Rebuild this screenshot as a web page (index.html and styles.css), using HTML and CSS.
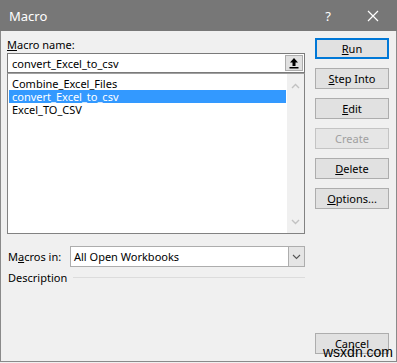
FILE: index.html
```html
<!DOCTYPE html>
<html lang="en">
<head>
    <meta charset="UTF-8">
    <meta name="viewport" content="width=device-width, initial-scale=1.0">
    <title>Macro</title>
    <link rel="stylesheet" href="styles.css">
</head>
<body>
    <div class="dialog">
        <div class="titlebar">
            <span class="title">Macro</span>
            <span class="help">?</span>
            <span class="close">
                <svg width="12" height="12" viewBox="0 0 12 12"><path d="M1 1 L11 11 M11 1 L1 11" stroke="#fff" stroke-width="1.2" fill="none"/></svg>
            </span>
        </div>

        <div class="content">
            <div class="main">
                <div class="name-label"><u>M</u>acro name:</div>
                <div class="name-box">
                    <span class="name-value">convert_Excel_to_csv</span>
                    <span class="up-btn">
                        <svg width="10" height="12" viewBox="0 0 10 12"><path d="M5 1 L9 5.5 L6.5 5.5 L6.5 9 L3.5 9 L3.5 5.5 L1 5.5 Z" fill="#000"/><rect x="0.5" y="10" width="9" height="1.5" fill="#000"/></svg>
                    </span>
                </div>
                <div class="list">
                    <div class="items">
                        <div class="item">Combine_Excel_Files</div>
                        <div class="item selected">convert_Excel_to_csv</div>
                        <div class="item">Excel_TO_CSV</div>
                    </div>
                    <div class="scrollbar">
                        <svg width="9" height="6" viewBox="0 0 9 6"><path d="M1 5 L4.5 1.5 L8 5" stroke="#c2c2c2" stroke-width="1.4" fill="none"/></svg>
                        <svg width="9" height="6" viewBox="0 0 9 6"><path d="M1 1 L4.5 4.5 L8 1" stroke="#c2c2c2" stroke-width="1.4" fill="none"/></svg>
                    </div>
                </div>
                <div class="macros-in">
                    <span class="macros-label">M<u>a</u>cros in:</span>
                    <div class="select">
                        <span class="select-value">All Open Workbooks</span>
                        <span class="drop">
                            <svg width="9" height="6" viewBox="0 0 9 6"><path d="M1 1 L4.5 4.5 L8 1" stroke="#555" stroke-width="1.1" fill="none"/></svg>
                        </span>
                    </div>
                </div>
                <div class="description">
                    <span>Description</span>
                    <span class="rule"></span>
                </div>
            </div>

            <div class="buttons">
                <button class="btn default"><u>R</u>un</button>
                <button class="btn"><u>S</u>tep Into</button>
                <button class="btn"><u>E</u>dit</button>
                <button class="btn disabled">Create</button>
                <button class="btn"><u>D</u>elete</button>
                <button class="btn"><u>O</u>ptions...</button>
                <button class="btn cancel">Cancel</button>
            </div>
        </div>

        <span class="watermark">wsxdn.com</span>
    </div>
</body>
</html>
```

FILE: styles.css
```css
body {
  margin:0;
  background:#f0f0f0;
  font-family:"Noto Sans", "DejaVu Sans", sans-serif;
  font-size:11px;
  color:#000;
}
.dialog {
  position:relative;
  width:397px;
  height:362px;
  box-sizing:border-box;
  border:1px solid #8a8a8a;
  border-top:none;
  background:#f0f0f0;
  display:flex;
  flex-direction:column;
}
.titlebar {
  height:31px;
  margin:0 -1px;
  background:#777777;
  color:#fff;
  display:flex;
  align-items:center;
  flex-shrink:0;
}
.titlebar .title {
  margin-left:9px;
  font-size:13px;
  flex:1;
}
.titlebar .help {
  font-size:13px;
  width:12px;
  text-align:center;
  margin-right:33px;
}
.titlebar .close {
  display:flex;
  margin-right:18px;
}
.content {
  flex:1;
  display:flex;
  gap:10px;
  padding:6px 0 7px 6px;
}
.main {
  width:298px;
  display:flex;
  flex-direction:column;
}
.name-label {
  height:16px;
  line-height:16px;
}
.name-box {
  height:20px;
  box-sizing:border-box;
  border:1px solid #7a7a7a;
  background:#fff;
  display:flex;
  align-items:center;
  padding-left:4px;
  padding-right:1px;
}
.name-value {
  flex:1;
}
.up-btn {
  width:18px;
  height:16px;
  box-sizing:border-box;
  border:1px solid #adadad;
  background:#e1e1e1;
  display:flex;
  align-items:center;
  justify-content:center;
}
.list {
  height:161px;
  box-sizing:border-box;
  border:1px solid #828282;
  border-top-color:#a0a0a0;
  background:#fff;
  display:flex;
}
.items {
  flex:1;
  padding:3px 1px 0 1px;
}
.item {
  height:13px;
  line-height:13px;
  padding-left:3px;
  overflow:hidden;
}
.item.selected {
  background:#3399ff;
  color:#fff;
}
.scrollbar {
  width:17px;
  background:#f0f0f0;
  display:flex;
  flex-direction:column;
  justify-content:space-between;
  align-items:center;
  padding:9px 0 8px;
}
.macros-in {
  margin-top:12px;
  display:flex;
  align-items:center;
}
.macros-label {
  width:62px;
  padding-left:1px;
}
.select {
  flex:1;
  height:21px;
  box-sizing:border-box;
  border:1px solid #adadad;
  background:#fff;
  display:flex;
  align-items:center;
  padding-left:3px;
}
.select-value {
  flex:1;
}
.drop {
  width:16px;
  height:19px;
  box-sizing:border-box;
  border-left:1px solid #adadad;
  background:#e5e5e5;
  display:flex;
  align-items:center;
  justify-content:center;
}
.description {
  margin-top:3px;
  height:15px;
  display:flex;
  align-items:center;
  gap:6px;
  padding-left:1px;
}
.description .rule {
  flex:1;
  border-top:1px solid #dcdcdc;
}
.buttons {
  width:74px;
  display:flex;
  flex-direction:column;
  gap:9px;
  padding-top:1px;
}
.btn {
  height:21px;
  padding:0;
  border:1px solid #adadad;
  background:#e1e1e1;
  font-family:inherit;
  font-size:11px;
  color:#000;
}
.btn.default {
  border:2px solid #0078d7;
}
.btn.disabled {
  border-color:#c4c4c4;
  background:#e6e6e6;
  color:#a0a0a0;
}
.btn.cancel {
  margin-top:auto;
}
.watermark {
  position:absolute;
  left:322px;
  top:344px;
  font-family:"Liberation Sans", Arial, sans-serif;
  font-size:14px;
  color:#000;
}
```
